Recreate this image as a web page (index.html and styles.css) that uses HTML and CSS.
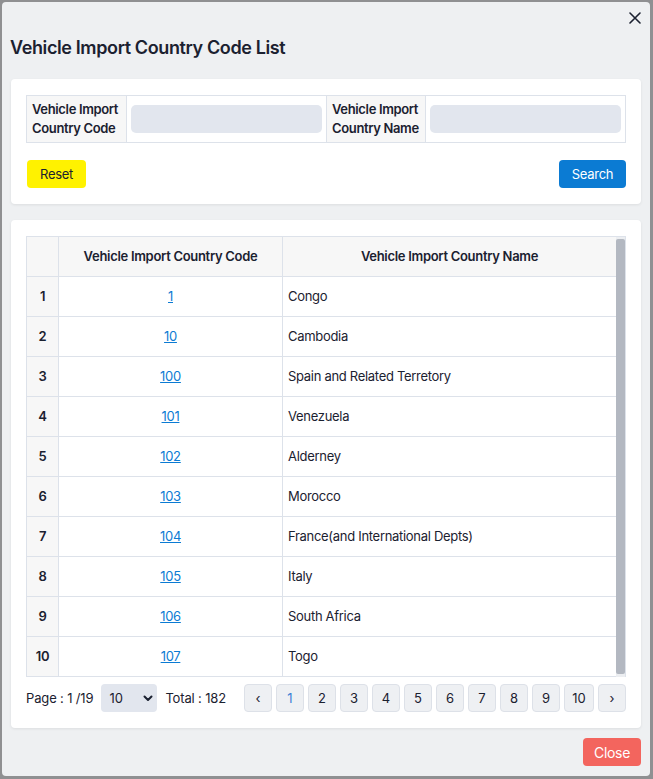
FILE: index.html
```html
<!DOCTYPE html>
<html>
<head>
<meta charset="utf-8">
<link rel="stylesheet" href="styles.css">
</head>
<body>
<div class="modal">
  <button class="x-btn" aria-label="close">
    <svg width="12" height="12" viewBox="0 0 12 12"><path d="M1 1L11 11M11 1L1 11" stroke="#1b2130" stroke-width="1.6" stroke-linecap="round"/></svg>
  </button>
  <h2 class="title">Vehicle Import Country Code List</h2>

  <div class="card">
    <table class="search-table">
      <colgroup><col class="c-lab1"><col class="c-in1"><col class="c-lab2"><col></colgroup>
      <tr>
        <th>Vehicle Import<br>Country Code</th>
        <td><input class="inp" type="text"></td>
        <th>Vehicle Import<br>Country Name</th>
        <td><input class="inp" type="text"></td>
      </tr>
    </table>
    <div class="actions">
      <button class="btn btn-reset">Reset</button>
      <button class="btn btn-search">Search</button>
    </div>
  </div>

  <div class="card list-card">
    <div class="grid-wrap">
      <table class="grid">
        <colgroup><col class="c-idx"><col class="c-code"><col></colgroup>
        <thead>
          <tr><th></th><th>Vehicle Import Country Code</th><th>Vehicle Import Country Name</th></tr>
        </thead>
        <tbody>
          <tr><td class="idx">1</td><td class="code"><a href="#">1</a></td><td>Congo</td></tr>
          <tr><td class="idx">2</td><td class="code"><a href="#">10</a></td><td>Cambodia</td></tr>
          <tr><td class="idx">3</td><td class="code"><a href="#">100</a></td><td>Spain and Related Terretory</td></tr>
          <tr><td class="idx">4</td><td class="code"><a href="#">101</a></td><td>Venezuela</td></tr>
          <tr><td class="idx">5</td><td class="code"><a href="#">102</a></td><td>Alderney</td></tr>
          <tr><td class="idx">6</td><td class="code"><a href="#">103</a></td><td>Morocco</td></tr>
          <tr><td class="idx">7</td><td class="code"><a href="#">104</a></td><td>France(and International Depts)</td></tr>
          <tr><td class="idx">8</td><td class="code"><a href="#">105</a></td><td>Italy</td></tr>
          <tr><td class="idx">9</td><td class="code"><a href="#">106</a></td><td>South Africa</td></tr>
          <tr class="last"><td class="idx">10</td><td class="code"><a href="#">107</a></td><td>Togo</td></tr>
        </tbody>
      </table>
      <div class="vscroll"><div class="vthumb"></div></div>
    </div>
    <div class="pager">
      <span class="pinfo">Page : 1 /19</span>
      <span class="sel-wrap">
        <select class="sel"><option>10</option><option>20</option><option>50</option></select>
        <svg class="chev" width="10" height="7" viewBox="0 0 10 7"><path d="M1.5 1.5L5 5L8.5 1.5" fill="none" stroke="#1b2130" stroke-width="2" stroke-linecap="round" stroke-linejoin="round"/></svg>
      </span>
      <span class="pinfo">Total : 182</span>
      <div class="pages">
        <button class="pg">&#8249;</button>
        <button class="pg active">1</button>
        <button class="pg">2</button>
        <button class="pg">3</button>
        <button class="pg">4</button>
        <button class="pg">5</button>
        <button class="pg">6</button>
        <button class="pg">7</button>
        <button class="pg">8</button>
        <button class="pg">9</button>
        <button class="pg wide">10</button>
        <button class="pg">&#8250;</button>
      </div>
    </div>
  </div>

  <div class="footer">
    <button class="btn btn-close">Close</button>
  </div>
</div>
</body>
</html>
```

FILE: styles.css
```css
* { box-sizing: border-box; }

html, body {
  margin: 0;
  height: 100%;
}

body {
  background: #8f9092;
  font-family: Inter, "Noto Sans", sans-serif;
  color: #1b2130;
  font-size: 13px;
  letter-spacing: -0.3px;
  padding: 2px 3px 0 2px;
}

.modal {
  position: relative;
  width: 648px;
  height: 774px;
  background: #eef0f2;
  border-radius: 4px;
  padding: 0 9px;
}

.x-btn {
  position: absolute;
  top: 9px;
  right: 8px;
  width: 14px;
  height: 14px;
  padding: 0;
  border: none;
  background: transparent;
  display: flex;
  align-items: center;
  justify-content: center;
}

.title {
  margin: 0 0 19px -1px;
  padding-top: 34px;
  font-size: 18px;
  line-height: 24px;
  font-weight: 600;
  letter-spacing: -0.38px;
}

.card {
  background: #fff;
  border-radius: 4px;
  padding: 16px 15px;
  box-shadow: 0 1px 3px rgba(0, 0, 0, 0.08);
}

.list-card {
  margin-top: 16px;
}

/* search form */
.search-table {
  width: 100%;
  border-collapse: collapse;
  table-layout: fixed;
}
.c-lab1 { width: 100px; }
.c-in1 { width: 200px; }
.c-lab2 { width: 99px; }

.search-table th,
.search-table td {
  border: 1px solid #dde2ea;
}
.search-table th {
  background: #f7f7f7;
  text-align: left;
  font-weight: 600;
  font-size: 13px;
  line-height: 19px;
  padding: 4px 5px;
  white-space: nowrap;
  letter-spacing: -0.35px;
}
.search-table td {
  padding: 9px 4px;
}
.inp {
  display: block;
  width: 100%;
  height: 28px;
  border: none;
  border-radius: 5px;
  background: #e2e6ee;
  outline: none;
}

.actions {
  display: flex;
  justify-content: space-between;
  margin-top: 17px;
}

.btn {
  height: 28px;
  border: none;
  border-radius: 4px;
  font-family: Inter, "Noto Sans", sans-serif;
  font-size: 13px;
  letter-spacing: -0.3px;
  padding: 0;
}
.btn-reset {
  background: #fff200;
  color: #1b2130;
  width: 59px;
  margin-left: 1px;
}
.btn-search {
  background: #0b7bd3;
  color: #fff;
  width: 67px;
}

/* grid */
.grid-wrap {
  display: flex;
  height: 441px;
  border: 1px solid #dde2ea;
  border-bottom: none;
}

.grid {
  flex: 1;
  align-self: flex-start;
  border-collapse: separate;
  border-spacing: 0;
  table-layout: fixed;
}
.c-idx { width: 32px; }
.c-code { width: 224px; }

.grid th,
.grid td {
  height: 40px;
  border-right: 1px solid #dde2ea;
  border-bottom: 1px solid #dde2ea;
  padding: 0 5px 1px;
  font-size: 13px;
}
.grid th:last-child,
.grid td:last-child {
  border-right: none;
}
.grid th {
  background: #f7f7f7;
  font-weight: 600;
  text-align: center;
}
.grid td.idx {
  background: #f7f7f7;
  font-weight: 600;
  text-align: center;
  padding: 0 0 1px;
}
.grid td.code {
  text-align: center;
}
.grid a {
  color: #0b7bd3;
  text-decoration: underline;
}

.vscroll {
  width: 9px;
  flex: none;
  background: #eceef1;
  padding: 2px 0 3px;
}
.vthumb {
  height: 100%;
  background: #b3b8c1;
  border-radius: 2px;
}

/* pager */
.pager {
  display: flex;
  align-items: center;
  margin-top: 7px;
  height: 28px;
}
.pinfo {
  font-size: 13px;
  letter-spacing: -0.15px;
}
.sel-wrap {
  position: relative;
  margin: 0 8px;
  display: inline-block;
}
.sel {
  appearance: none;
  -webkit-appearance: none;
  width: 56px;
  height: 28px;
  border: none;
  border-radius: 4px;
  background: #e2e6ee;
  font-family: Inter, "Noto Sans", sans-serif;
  font-size: 13px;
  color: #1b2130;
  padding: 0 0 0 8px;
  display: block;
}
.chev {
  position: absolute;
  right: 4px;
  top: 11px;
  pointer-events: none;
}

.pages {
  margin-left: auto;
  display: flex;
  gap: 4px;
}
.pg {
  width: 28px;
  height: 28px;
  padding: 0;
  border: 1px solid #dde1e8;
  border-radius: 4px;
  background: #eef0f3;
  font-family: Inter, "Noto Sans", sans-serif;
  font-size: 13px;
  color: #1b2130;
}
.pg.wide { width: 30px; }
.pg.active { color: #3d7fd6; }

.footer {
  display: flex;
  justify-content: flex-end;
  padding-top: 10px;
}
.btn-close {
  background: #f3655e;
  color: #fff;
  font-size: 14px;
  width: 58px;
}
```
